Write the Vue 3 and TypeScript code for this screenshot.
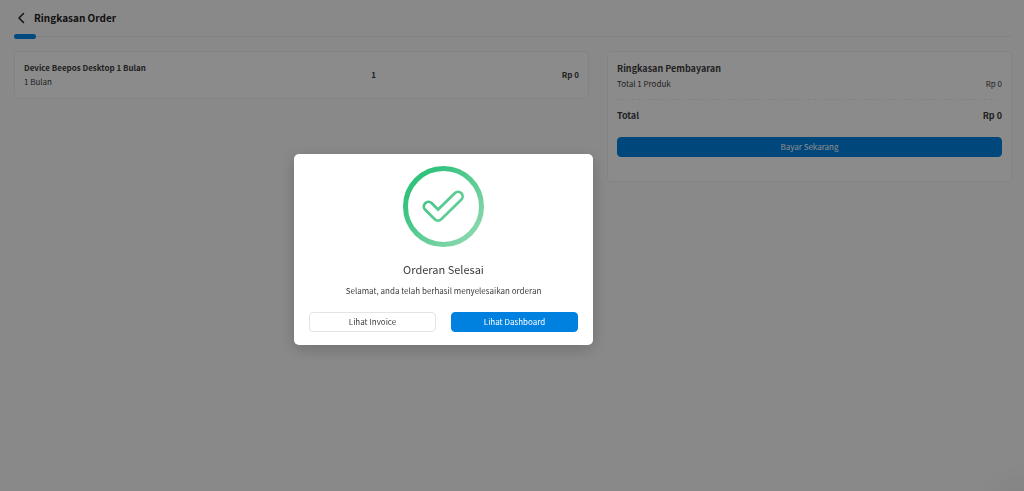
<script setup lang="ts">
interface OrderItem {
  name: string
  period: string
  quantity: number
  price: number
}

const items: OrderItem[] = [
  { name: 'Device Beepos Desktop 1 Bulan', period: '1 Bulan', quantity: 1, price: 0 },
]

const total = items.reduce((sum, item) => sum + item.price * item.quantity, 0)
const rupiah = (value: number): string => `Rp ${value.toLocaleString('id-ID')}`
</script>

<template>
  <div class="page">
    <header class="header">
      <button class="back" type="button" aria-label="Kembali">
        <svg viewBox="0 0 8 12" width="8" height="12" aria-hidden="true">
          <path d="M6.500 1.500 2 6l4.500 4.500" />
        </svg>
      </button>
      <h1>Ringkasan Order</h1>
    </header>
    <div class="progress"><span class="progress-fill"></span></div>

    <main class="columns">
      <section class="card items">
        <article v-for="item in items" :key="item.name" class="item">
          <div>
            <h2>{{ item.name }}</h2>
            <p>{{ item.period }}</p>
          </div>
          <strong class="quantity">{{ item.quantity }}</strong>
          <strong class="price">{{ rupiah(item.price) }}</strong>
        </article>
      </section>

      <aside class="card summary">
        <h2>Ringkasan Pembayaran</h2>
        <div class="row">
          <span>Total {{ items.length }} Produk</span>
          <span>{{ rupiah(total) }}</span>
        </div>
        <div class="row total">
          <span>Total</span>
          <span>{{ rupiah(total) }}</span>
        </div>
        <button class="button primary" type="button">Bayar Sekarang</button>
      </aside>
    </main>

    <div class="overlay">
      <div class="dialog" role="dialog" aria-modal="true" aria-labelledby="dialog-title">
        <svg class="success" viewBox="0.5 0.5 81 81" width="81" height="81" aria-hidden="true">
          <defs>
            <linearGradient id="success-green" gradientUnits="userSpaceOnUse" x1="18" y1="18" x2="68" y2="68">
              <stop offset="0" stop-color="#32c27c" />
              <stop offset="1" stop-color="#84d6aa" />
            </linearGradient>
          </defs>
          <circle cx="41" cy="41" r="38" stroke="url(#success-green)" stroke-width="5" />
          <path d="M26 41l9.500 9.500L55.500 31" stroke="url(#success-green)" stroke-width="12" />
          <path d="M26 41l9.500 9.500L55.500 31" stroke="#fff" stroke-width="6.500" />
        </svg>
        <h2 id="dialog-title">Orderan Selesai</h2>
        <p>Selamat, anda telah berhasil menyelesaikan orderan</p>
        <div class="actions">
          <button class="button outline" type="button">Lihat Invoice</button>
          <button class="button primary" type="button">Lihat Dashboard</button>
        </div>
      </div>
    </div>
  </div>
</template>

<style>
body {
  background: #fafafa;
}
</style>

<style scoped>
.page {
  min-height: 100vh;
  box-sizing: border-box;
  padding: 8px 12px 8px 14px;
  font-family: "Noto Sans CJK SC", "Noto Sans", sans-serif;
  font-size: 8px;
  line-height: 14px;
  color: #3c3c3c;
  background: radial-gradient(circle at 100% 105%, #ececec 0, #fafafa 56px);
}

h1,
h2,
p {
  margin: 0;
}

button {
  font: inherit;
  cursor: pointer;
}

.header {
  display: flex;
  align-items: center;
  gap: 9px;
  padding-left: 3px;
  height: 20px;
}

.back {
  display: flex;
  padding: 0;
  border: 0;
  background: none;
}

.back svg {
  fill: none;
  stroke: #222;
  stroke-width: 1.5;
  stroke-linecap: round;
  stroke-linejoin: round;
}

h1 {
  font-size: 10px;
  line-height: 20px;
  font-weight: 700;
  color: #222;
}

.progress {
  display: flex;
  align-items: center;
  height: 5px;
  margin: 6px 0 12px;
  background: linear-gradient(#efefef, #efefef) center / 100% 1px no-repeat;
}

.progress-fill {
  width: 22px;
  height: 5px;
  border-radius: 3px;
  background: #0088e8;
}

.columns {
  display: grid;
  grid-template-columns: 575fr 405fr;
  align-items: start;
  gap: 18px;
}

.card {
  border: 1px solid #efefef;
  border-radius: 4px;
  background: #fefefe;
}

.items {
  padding: 9px;
}

.item {
  display: grid;
  grid-template-columns: 50fr 26fr 24fr;
  align-items: center;
}

.item h2 {
  font-size: 8px;
  font-weight: 700;
}

.quantity {
  text-align: center;
}

.price {
  text-align: right;
}

.summary {
  padding: 9px 9px 24px;
}

.summary h2 {
  font-size: 9px;
  line-height: 16px;
  font-weight: 700;
}

.row {
  display: flex;
  justify-content: space-between;
}

.total {
  margin: 8px 0 14px;
  padding-top: 9px;
  border-top: 1px dashed #efefef;
  font-size: 9px;
  font-weight: 700;
}

.button {
  display: block;
  width: 100%;
  height: 20px;
  padding: 0;
  border: 1px solid transparent;
  border-radius: 4px;
}

.primary {
  border-color: #0081e0;
  background: #0081e0;
  color: #fff;
}

.outline {
  border-color: #e4e4e4;
  background: #fff;
  color: #3c3c3c;
}

.overlay {
  position: fixed;
  inset: 0;
  display: flex;
  align-items: center;
  justify-content: center;
  padding: 8px 137px 0 0;
  background: rgba(0, 0, 0, 0.45);
}

.dialog {
  box-sizing: border-box;
  width: 299px;
  padding: 12px 15px 13px;
  border-radius: 5px;
  background: #fff;
  text-align: center;
  box-shadow: 0 4px 16px rgba(0, 0, 0, 0.2);
}

.success {
  display: block;
  margin: 0 auto 13px;
  fill: none;
  stroke-linecap: round;
  stroke-linejoin: round;
}

.dialog h2 {
  margin-bottom: 6px;
  font-size: 11px;
  line-height: 18px;
  font-weight: 400;
}

.actions {
  display: grid;
  grid-template-columns: 1fr 1fr;
  gap: 15px;
  margin-top: 14px;
}
</style>
